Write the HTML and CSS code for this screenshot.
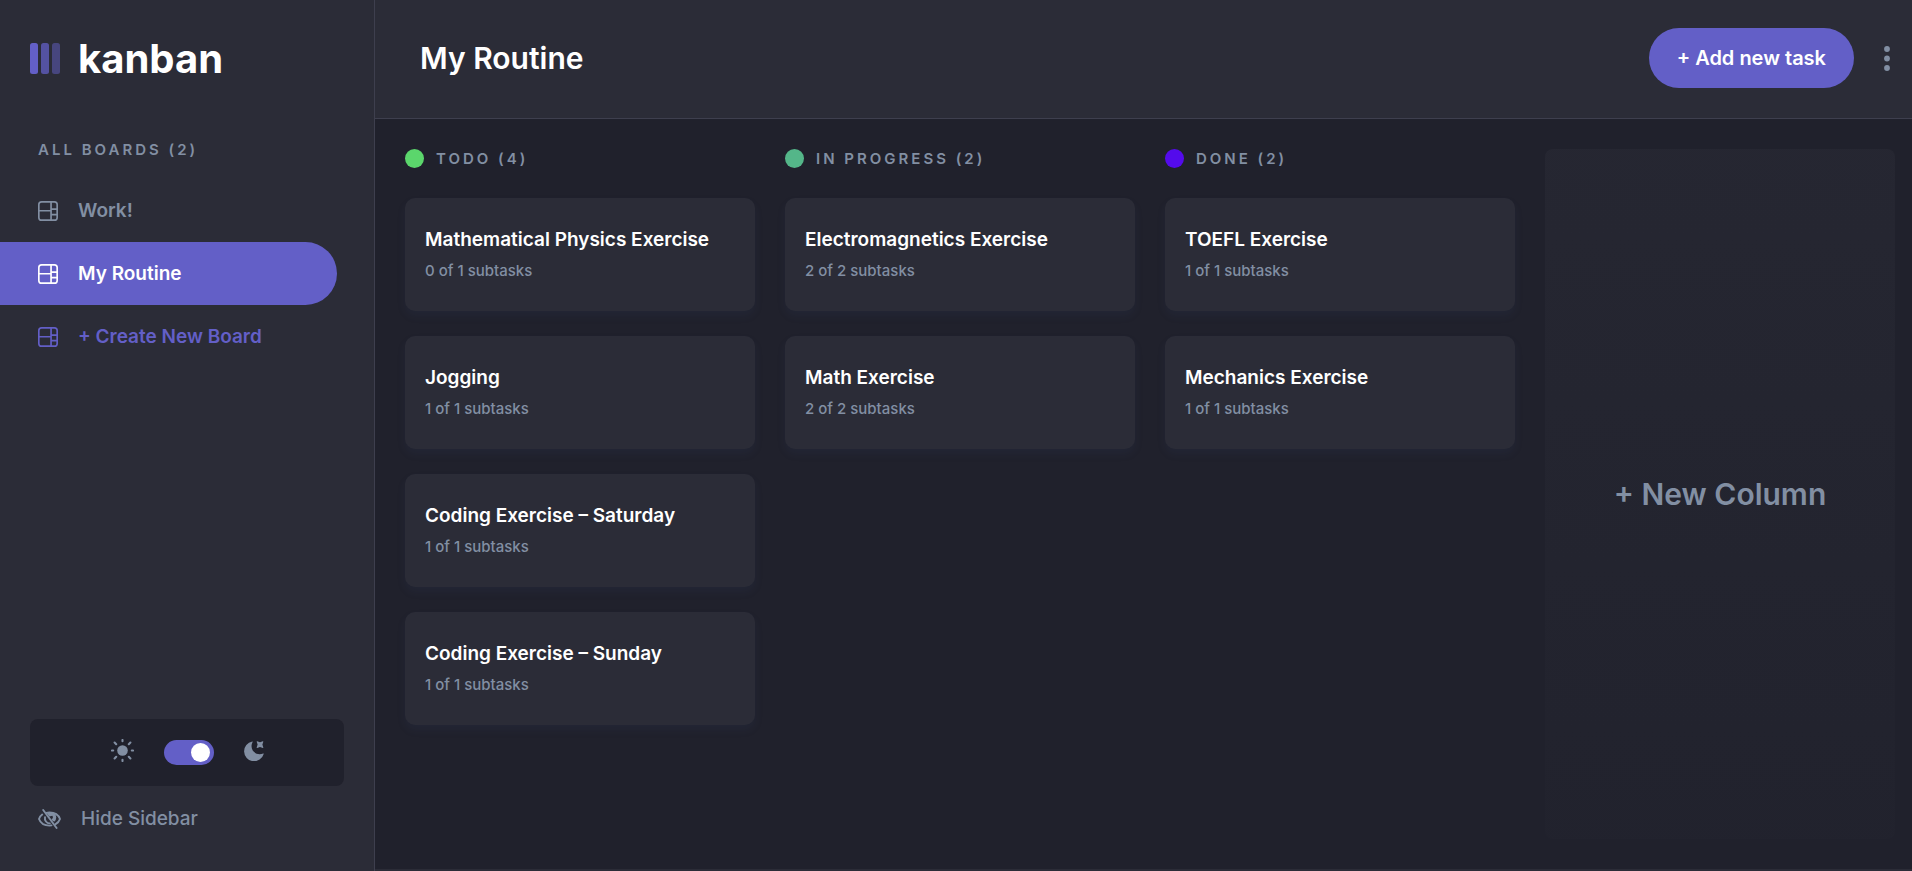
FILE: index.html
```html
<!DOCTYPE html>
<html lang="en">
<head>
<meta charset="utf-8">
<meta name="viewport" content="width=device-width, initial-scale=1">
<title>Kanban – My Routine</title>
<link rel="stylesheet" href="styles.css">
</head>
<body>
<svg width="0" height="0" class="sprite" aria-hidden="true">
  <symbol id="board" viewBox="0 0 16 16">
    <path fill="currentColor" d="M0 2.889A2.889 2.889 0 0 1 2.889 0H13.11A2.889 2.889 0 0 1 16 2.889V13.11A2.888 2.888 0 0 1 13.111 16H2.89A2.889 2.889 0 0 1 0 13.111V2.89Zm1.333 5.555v4.667c0 .859.697 1.556 1.556 1.556h6.889V8.444H1.333Zm8.445-1.333V1.333h-6.89A1.556 1.556 0 0 0 1.334 2.89V7.11h8.445Zm1.333-1.333h3.556V2.889c0-.859-.697-1.556-1.556-1.556h-2v4.445Zm0 4.444h3.556V7.111H11.11v3.111Zm0 1.333v3.112h2c.859 0 1.556-.697 1.556-1.556v-1.555H11.11Z"/>
  </symbol>
</svg>
<div class="app">
  <aside class="sidebar">
    <div class="logo">
      <svg class="logo-mark" viewBox="0 0 30 31" aria-hidden="true"><g fill="#635fc7"><rect width="8" height="31" rx="2.500"/><rect x="11" width="8" height="31" rx="2.500" opacity=".75"/><rect x="22" width="8" height="31" rx="2.500" opacity=".5"/></g></svg>
      <span>kanban</span>
    </div>
    <h2 class="caption boards-title">ALL BOARDS (2)</h2>
    <nav class="boards">
      <button class="board-item"><svg class="icon"><use href="#board"/></svg>Work!</button>
      <button class="board-item active"><svg class="icon"><use href="#board"/></svg>My Routine</button>
      <button class="board-item create"><svg class="icon"><use href="#board"/></svg>+ Create New Board</button>
    </nav>
    <div class="theme">
      <svg class="sun" viewBox="0 0 23 23" aria-hidden="true"><circle cx="11.500" cy="11.500" r="5.300" fill="currentColor"/><path d="M11.500 1v1.200M11.500 20.800V22M1 11.500h1.200M20.800 11.500H22M3.600 3.600l1.600 1.600M17.800 17.800l1.600 1.600M3.600 19.400l1.600-1.600M17.800 5.200l1.600-1.600" stroke="currentColor" stroke-width="2.100" stroke-linecap="round" fill="none"/></svg>
      <input class="toggle" type="checkbox" role="switch" aria-label="Dark theme" checked>
      <svg class="moon" viewBox="0 0 20 20" aria-hidden="true"><path fill="currentColor" d="M8.300.4a.4.4 0 0 1 .3.700A8 8 0 0 0 7.500 5c0 4.600 3.600 8.200 8.200 8.200 1.200 0 2.300-.2 3.500-.7.400-.1.600.2.500.5A10 10 0 1 1 8.300.4Z"/><path fill="currentColor" d="M13.200.3l2.800.9 2.800-.9c.4-.1.600.1.500.5l-.9 2.800.9 2.800c.1.400-.1.600-.5.500l-2.800-.9-2.800.9c-.4.100-.6-.1-.5-.5l.9-2.800-.9-2.800c-.1-.4.100-.6.500-.5Z"/></svg>
    </div>
    <button class="hide"><svg viewBox="0 0 23 20" aria-hidden="true"><g fill="none" stroke="currentColor" stroke-width="1.900" stroke-linecap="round"><path d="M4.200 5.600Q1.800 7.400 1 10c1.400 3.900 5.600 6.600 10.500 6.600l2-.2"/><path d="M8.300 3.900A12 12 0 0 1 11.500 3.500c4.900 0 9.100 2.600 10.500 6.500a9 9 0 0 1-4.400 5.100"/><path d="M5.200 1 18.600 19"/><path d="M7 8.300a5 5 0 0 0 4.800 6.100"/></g><path fill="currentColor" d="M9 4.600a5.400 5.400 0 0 1 7.600 7.800l-1.800-.3-1.500-2a1.900 1.900 0 0 0 1-3.300l-3 .6Z"/></svg>Hide Sidebar</button>
  </aside>
  <div class="content">
    <header class="topbar">
      <h1>My Routine</h1>
      <button class="add">+ Add new task</button>
      <button class="more" aria-label="Board options"><svg viewBox="0 0 6 25"><g fill="currentColor"><circle cx="3" cy="3" r="2.900"/><circle cx="3" cy="12.500" r="2.900"/><circle cx="3" cy="22" r="2.900"/></g></svg></button>
    </header>
    <main class="board">
      <section class="column">
        <h2 class="caption"><span class="dot todo"></span>TODO (4)</h2>
        <article class="card"><h3>Mathematical Physics Exercise</h3><p>0 of 1 subtasks</p></article>
        <article class="card"><h3>Jogging</h3><p>1 of 1 subtasks</p></article>
        <article class="card"><h3>Coding Exercise – Saturday</h3><p>1 of 1 subtasks</p></article>
        <article class="card"><h3>Coding Exercise – Sunday</h3><p>1 of 1 subtasks</p></article>
      </section>
      <section class="column">
        <h2 class="caption"><span class="dot progress"></span>IN PROGRESS (2)</h2>
        <article class="card"><h3>Electromagnetics Exercise</h3><p>2 of 2 subtasks</p></article>
        <article class="card"><h3>Math Exercise</h3><p>2 of 2 subtasks</p></article>
      </section>
      <section class="column">
        <h2 class="caption"><span class="dot done"></span>DONE (2)</h2>
        <article class="card"><h3>TOEFL Exercise</h3><p>1 of 1 subtasks</p></article>
        <article class="card"><h3>Mechanics Exercise</h3><p>1 of 1 subtasks</p></article>
      </section>
      <button class="new-column">+ New Column</button>
    </main>
  </div>
</div>
</body>
</html>
```
FILE: styles.css
```css
:root {
  --bg: #20212c;
  --panel: #2b2c37;
  --line: #3e3f4e;
  --muted: #828fa3;
  --purple: #635fc7;
}

* { box-sizing: border-box; }

body {
  margin: 0;
  background: var(--panel);
  color: #fff;
  font-family: Inter, "Liberation Sans", sans-serif;
}

h1, h2, h3, p { margin: 0; }

button {
  border: 0;
  padding: 0;
  background: none;
  color: inherit;
  font: inherit;
  cursor: pointer;
}

.sprite { position: absolute; }
.app { display: flex; min-height: 100vh; }

.sidebar {
  display: flex;
  flex-direction: column;
  flex: 0 0 375px;
  border-right: 1px solid var(--line);
  padding-bottom: 37px;
  color: var(--muted);
}

.logo {
  display: flex;
  align-items: center;
  gap: 18px;
  height: 118px;
  padding: 0 30px 2px;
  color: #fff;
  font-size: 40px;
  font-weight: 700;
}
.logo-mark { width: 30px; height: 31px; }

.caption {
  display: flex;
  align-items: center;
  color: var(--muted);
  font-size: 15px;
  font-weight: 600;
  line-height: 19px;
  letter-spacing: 3px;
}
.boards-title { padding: 22px 38px 20px; }

.boards { display: grid; justify-items: start; }
.board-item {
  display: flex;
  align-items: center;
  gap: 20px;
  width: 90%;
  height: 63px;
  padding-left: 38px;
  border-radius: 0 32px 32px 0;
  font-size: 19px;
  font-weight: 600;
}
.icon { width: 20px; height: 20px; }
.active { background: var(--purple); color: #fff; }
.create { color: var(--purple); }

.theme {
  display: flex;
  align-items: center;
  justify-content: center;
  gap: 30px;
  height: 67px;
  margin: auto 30px 0;
  border-radius: 8px;
  background: var(--bg);
}
.theme svg { margin-bottom: 4px; }
.sun { width: 23px; height: 23px; }
.moon { width: 20px; height: 20px; }

.toggle {
  display: flex;
  align-items: center;
  justify-content: flex-end;
  appearance: none;
  width: 50px;
  height: 25px;
  margin: 0;
  padding: 0 4px;
  border-radius: 16px;
  background: var(--purple);
}
.toggle::before {
  content: "";
  width: 19px;
  height: 19px;
  border-radius: 50%;
  background: #fff;
}

.hide {
  display: flex;
  align-items: center;
  gap: 20px;
  margin-top: 18px;
  padding-left: 38px;
  font-size: 19px;
  font-weight: 500;
  line-height: 30px;
}
.hide svg { width: 23px; height: 20px; }

.content {
  display: flex;
  flex: 1;
  flex-direction: column;
  min-width: 0;
}

.topbar {
  display: flex;
  align-items: center;
  height: 119px;
  padding: 0 22px 2px 45px;
  border-bottom: 1px solid var(--line);
}
.topbar h1 { margin-right: auto; font-size: 30px; font-weight: 600; }
.add {
  height: 60px;
  padding: 0 28px;
  border-radius: 30px;
  background: var(--purple);
  font-size: 20px;
  font-weight: 600;
}
.more { display: flex; margin-left: 30px; color: var(--muted); }
.more svg { width: 6px; height: 25px; }

.board {
  display: grid;
  flex: 1;
  grid-template-columns: repeat(4, 1fr);
  gap: 30px;
  padding: 30px 17px 30px 30px;
  border-bottom: 2px solid var(--panel);
  background: var(--bg);
}
.column { display: flex; flex-direction: column; gap: 25px; }
.column .caption { gap: 12px; margin-bottom: 5px; }
.dot { width: 19px; height: 19px; border-radius: 50%; }
.todo { background: #5bd66c; }
.progress { background: #54b689; }
.done { background: #540bec; }

.card {
  display: grid;
  align-content: start;
  gap: 7px;
  min-height: 113px;
  padding: 29px 20px;
  border-radius: 10px;
  background: var(--panel);
  box-shadow: 0 5px 8px rgb(54 78 126 / 10%);
}
.card h3 { font-size: 19px; font-weight: 600; line-height: 26px; }
.card p { color: var(--muted); font-size: 15px; font-weight: 500; line-height: 22px; }

.new-column {
  border-radius: 8px;
  background: linear-gradient(rgb(43 44 55 / 50%), rgb(43 44 55 / 12%));
  color: var(--muted);
  font-size: 30px;
  font-weight: 600;
}
```
